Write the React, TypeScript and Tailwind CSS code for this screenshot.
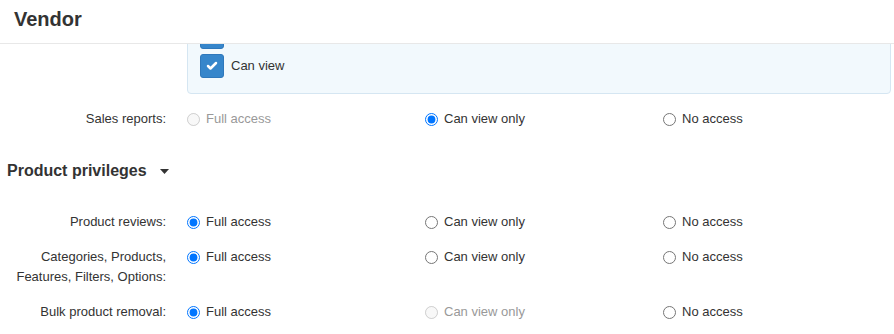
import { Check } from "lucide-react";

type Access = "full" | "view" | "none";

type Row = {
  label: string[];
  name: string;
  value: Access;
  disabled?: Access[];
};

const salesRow: Row = {
  label: ["Sales reports:"],
  name: "sales_reports",
  value: "view",
  disabled: ["full"],
};

const productRows: Row[] = [
  { label: ["Product reviews:"], name: "product_reviews", value: "full" },
  {
    label: ["Categories, Products,", "Features, Filters, Options:"],
    name: "catalog",
    value: "full",
  },
  {
    label: ["Bulk product removal:"],
    name: "bulk_removal",
    value: "full",
    disabled: ["view"],
  },
];

const options: { key: Access; text: string }[] = [
  { key: "full", text: "Full access" },
  { key: "view", text: "Can view only" },
  { key: "none", text: "No access" },
];

function BlueCheckbox({ label }: { label?: string }) {
  return (
    <div className="flex items-center gap-[7px]">
      <span className="flex h-6 w-6 items-center justify-center rounded-[3px] border border-[#2f78bb] bg-[#3686cb]">
        <Check className="h-3 w-3 text-white" strokeWidth={5} />
      </span>
      {label && <span className="text-[13px] leading-5 text-[#333]">{label}</span>}
    </div>
  );
}

function PrivilegeRow({ row }: { row: Row }) {
  return (
    <div className="flex items-start">
      <div className="w-[167px] shrink-0 pr-[1px] text-right text-[13px] leading-5 text-[#333]">
        {row.label.map((l) => (
          <div key={l}>{l}</div>
        ))}
      </div>
      <div className="ml-5 flex">
        {options.map((o) => {
          const disabled = row.disabled?.includes(o.key);
          return (
            <label key={o.key} className="flex h-5 w-[238px] items-center gap-[6px]">
              <input
                type="radio"
                name={row.name}
                defaultChecked={row.value === o.key}
                disabled={disabled}
                className="h-[13px] w-[13px]"
              />
              <span
                className={`text-[13px] leading-5 ${
                  disabled ? "text-[#999]" : "text-[#333]"
                }`}
              >
                {o.text}
              </span>
            </label>
          );
        })}
      </div>
    </div>
  );
}

export default function App() {
  return (
    <div className="h-[334px] w-[894px] overflow-hidden bg-white font-['Liberation_Sans',Arial,sans-serif]">
      <div className="relative z-10 h-11 border-b border-[#e8e8e8] bg-white pl-[14px] pt-[7px]">
        <h1 className="text-[20px] font-bold leading-6 text-[#333]">Vendor</h1>
      </div>

      <div className="overflow-hidden">
        <div className="ml-[187px] mr-[3px] -mt-[30px] flex flex-col gap-[5px] rounded-[4px] border border-[#d5e6f2] bg-[#f2f9fd] pb-[15px] pl-3 pt-[10px]">
          <BlueCheckbox />
          <BlueCheckbox label="Can view" />
        </div>

        <div className="mt-[15px]">
          <PrivilegeRow row={salesRow} />
        </div>

        <div className="mt-[30px] flex items-center pl-[7px]">
          <h2 className="text-[16px] font-bold leading-6 text-[#333]">Product privileges</h2>
          <svg width="9" height="5" viewBox="0 0 9 5" className="ml-[13px]">
            <path d="M0 0h9L4.5 5z" fill="#333" />
          </svg>
        </div>

        <div className="mt-[29px] flex flex-col gap-[15px]">
          {productRows.map((r) => (
            <PrivilegeRow key={r.name} row={r} />
          ))}
        </div>
      </div>
    </div>
  );
}
